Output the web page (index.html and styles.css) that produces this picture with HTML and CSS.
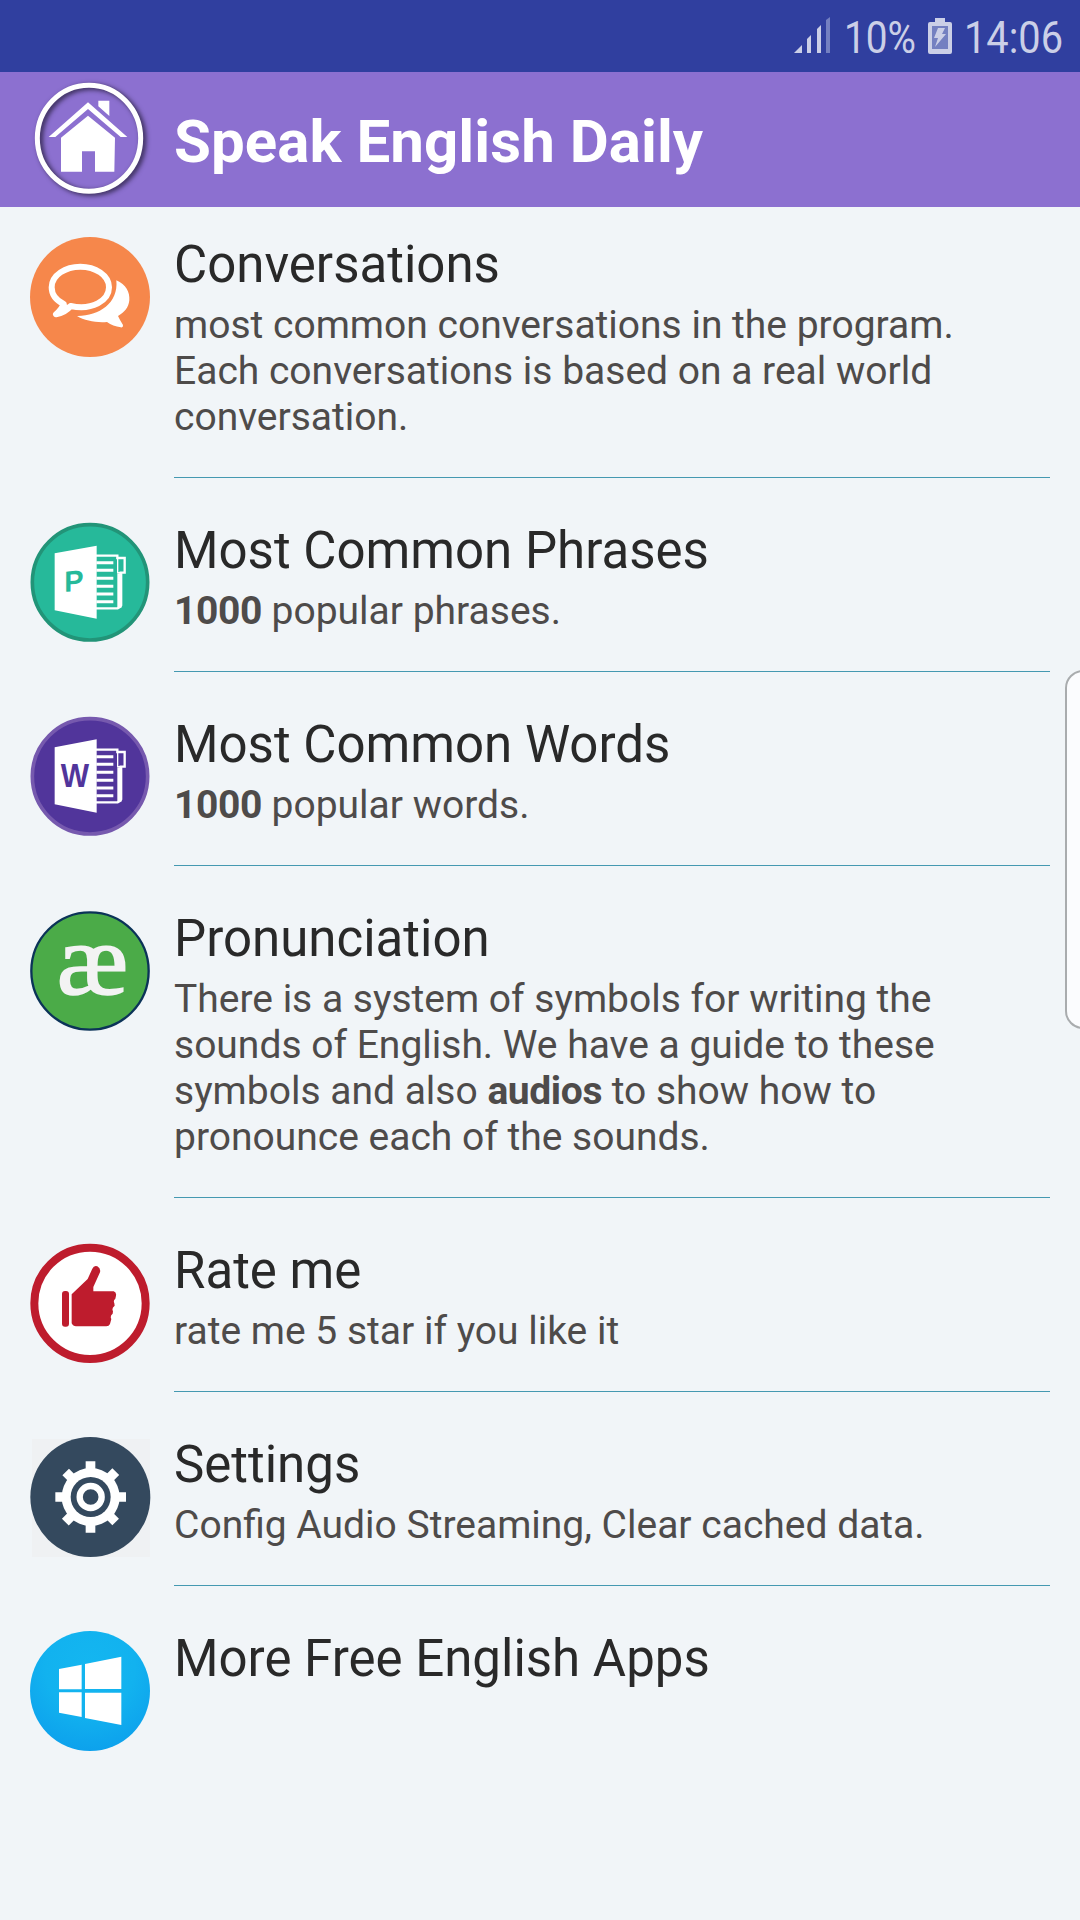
FILE: index.html
```html
<!DOCTYPE html>
<html lang="en">
<head>
    <meta charset="UTF-8">
    <title>Speak English Daily</title>
    <link rel="stylesheet" href="styles.css">
</head>
<body>
    <!-- status bar -->
    <div class="status-bar">
        <svg class="signal" viewBox="0 0 36 36">
            <path d="M0 36 L8 28 V36Z M13 22 L17 18 V36 H13Z M23 12 L27 8 V36 H23Z"/>
            <path class="dim" d="M32 3 L36 0 V36 H32Z"/>
        </svg>
        <svg class="battery-level" viewBox="0 0 70 36"><text x="-3" y="35" textLength="72" lengthAdjust="spacingAndGlyphs">10%</text></svg>
        <svg class="battery" viewBox="0 0 24 36">
            <path d="M7 0 H17 V4 H22 Q24 4 24 6 V34 Q24 36 22 36 H2 Q0 36 0 34 V6 Q0 4 2 4 H7Z"/>
            <path class="battery-inner" d="M4 8 H20 V31 H4Z"/>
            <path d="M10 10 H17 L14 16 H18 L7 29 L10 20 H6Z"/>
        </svg>
        <svg class="clock" viewBox="0 0 96 36"><text x="-2" y="35" textLength="99" lengthAdjust="spacingAndGlyphs">14:06</text></svg>
    </div>

    <header>
        <svg class="icon home" viewBox="90 57 360 360">
            <ellipse cx="267" cy="235" rx="155" ry="159"/>
            <path d="M146 231 L264 127 L382 231 H362 L264 147 L166 231Z M295 122 H328 V168 L295 139Z"/>
            <path d="M264 167 L345 233 L343 335 H285 V274 H246 V335 H183 V233Z"/>
        </svg>
        <h1>Speak English Daily</h1>
    </header>

    <main>
        <!-- Conversations -->
        <div class="item">
            <svg class="icon" viewBox="30 36 360 360">
                <circle cx="210" cy="216" r="180" fill="#f6874b"/>
                <path d="M181 125 C137 125 95 150 95 187 C95 209 108 226 131 237 Q126 253 108 268 Q135 263 152 243 C216 257 267 227 267 187 C267 150 225 125 181 125Z" fill="none" stroke="#fff" stroke-width="18" stroke-linejoin="round"/>
                <path d="M131 235 L152 243 Q135 263 108 268 Q126 253 131 235Z" fill="#fff"/>
                <path d="M289 166 C318 179 330 201 328 226 C326 247 313 263 294 273 Q300 286 309 300 Q310 309 302 307 Q279 304 261 291 C230 294 194 287 171 273 C235 274 296 236 289 166Z" fill="#fff"/>
            </svg>
            <div class="content">
                <h2>Conversations</h2>
                <p>most common conversations in the program.<br>Each conversations is based on a real world conversation.</p>
            </div>
        </div>

        <!-- Phrases -->
        <div class="item">
            <svg class="icon" viewBox="30 39 360 360">
                <circle cx="210" cy="217" r="173" fill="#26b99a" stroke="#229478" stroke-width="11"/>
                <path d="M228 137 H292 V144 H314 V188 H302 V290 L293 295 H228" fill="none" stroke="#fff" stroke-width="7"/>
                <path d="M229 158 H280 M229 181 H280 M229 205 H280 M229 229 H280 M229 252 H280 M229 275 H280" stroke="#fff" stroke-width="9"/>
                <path d="M293 144 V188 H303" fill="none" stroke="#fff" stroke-width="4"/>
                <path d="M292 190 H307 V287 L292 296Z M104 130 L230 107 V326 L104 301Z" fill="#fff"/>
                <text class="letter" x="0" y="0" transform="matrix(1 -.09 0 1 133 246)" font-size="88" textLength="58" lengthAdjust="spacingAndGlyphs" fill="#26b99a">P</text>
            </svg>
            <div class="content">
                <h2>Most Common Phrases</h2>
                <p><b>1000</b> popular phrases.</p>
            </div>
        </div>

        <!-- Words -->
        <div class="item">
            <svg class="icon" viewBox="30 36 360 360">
                <circle cx="210" cy="214" r="173" fill="#51359b" stroke="#7659ae" stroke-width="11"/>
                <path d="M228 134 H292 V141 H314 V185 H302 V287 L293 292 H228" fill="none" stroke="#fff" stroke-width="7"/>
                <path d="M229 155 H280 M229 178 H280 M229 202 H280 M229 226 H280 M229 249 H280 M229 272 H280" stroke="#fff" stroke-width="9"/>
                <path d="M293 141 V185 H303" fill="none" stroke="#fff" stroke-width="4"/>
                <path d="M292 187 H307 V284 L292 293Z M104 127 L230 103 V323 L104 298Z" fill="#fff"/>
                <text class="letter" x="0" y="0" transform="matrix(1 0 0 1 122 246)" font-size="98" textLength="85" lengthAdjust="spacingAndGlyphs" fill="#51359b">W</text>
            </svg>
            <div class="content">
                <h2>Most Common Words</h2>
                <p><b>1000</b> popular words.</p>
            </div>
        </div>

        <!-- Pronunciation -->
        <div class="item">
            <svg class="icon" viewBox="30 33 360 360">
                <circle cx="210" cy="213" r="176" fill="#4bab48" stroke="#0b3358" stroke-width="7"/>
                <text class="ae" x="110" y="281" font-size="305" textLength="214" lengthAdjust="spacingAndGlyphs">æ</text>
            </svg>
            <div class="content">
                <h2>Pronunciation</h2>
                <p>There is a system of symbols for writing the sounds of English. We have a guide to these symbols and also <b>audios</b> to show how to pronounce each of the sounds.</p>
            </div>
        </div>

        <!-- Rate -->
        <div class="item">
            <svg class="icon" viewBox="30 30 360 360">
                <circle cx="210" cy="211" r="167" fill="#fff" stroke="#be1c2d" stroke-width="24"/>
                <rect x="126" y="174" width="21" height="107" rx="9" fill="#be1c2d"/>
                <path d="M155 184 L203 138 L217 107 Q222 96 232 100 Q243 106 240 118 L220 162 V175 H281 Q290 178 288 188 L286 197 Q279 202 283 211 L284 218 Q274 226 279 235 L278 242 Q269 249 274 258 L270 273 Q267 280 259 280 H168 Q159 280 155 271Z" fill="#be1c2d"/>
            </svg>
            <div class="content">
                <h2>Rate me</h2>
                <p>rate me 5 star if you like it</p>
            </div>
        </div>

        <!-- Settings -->
        <div class="item">
            <svg class="icon" viewBox="30 30 360 360">
                <rect x="36" y="36" width="354" height="354" fill="#eff1f3"/>
                <circle cx="211" cy="210" r="180" fill="#34495e"/>
                <g fill="#fff">
                    <path d="M197 103 H226 V317 H197Z M106 196 H318 V224 H106Z"/>
                    <path d="M197 103 H226 V317 H197Z M106 196 H318 V224 H106Z" transform="rotate(45 212 210)"/>
                    <circle cx="212" cy="210" r="87"/>
                </g>
                <circle cx="212" cy="210" r="60" fill="#34495e"/>
                <circle cx="212" cy="210" r="33" fill="none" stroke="#fff" stroke-width="19"/>
            </svg>
            <div class="content">
                <h2>Settings</h2>
                <p>Config Audio Streaming, Clear cached data.</p>
            </div>
        </div>

        <!-- More apps -->
        <div class="item">
            <svg class="icon" viewBox="30 33 360 360">
                <defs>
                    <radialGradient id="sky" cx=".5" cy=".3" r=".75">
                        <stop offset="0" stop-color="#14b6f0"/>
                        <stop offset=".5" stop-color="#12b2ef"/>
                        <stop offset="1" stop-color="#0c9fec"/>
                    </radialGradient>
                </defs>
                <circle cx="210" cy="213" r="180" fill="url(#sky)"/>
                <path d="M117 147 L185 134 V208 H117Z M195 132 L304 110 V207 H195Z M117 217 H185 V291 L117 278Z M195 218 H304 V315 L195 294Z" fill="#fff"/>
            </svg>
            <div class="content">
                <h2>More Free English Apps</h2>
            </div>
        </div>
    </main>

    <!-- edge panel handle -->
    <div class="edge-handle"></div>
</body>
</html>
```
FILE: styles.css
```css
* {
    box-sizing: border-box;
}

body {
    margin: 0;
    height: 1920px;
    position: relative;
    overflow: hidden;
    background: #f1f5f8;
    font-family: Roboto, "Liberation Sans", sans-serif;
}

h1, h2, p {
    margin: 0;
}

svg {
    display: block;
    flex: none;
    overflow: visible;
}

/* status bar */
.status-bar {
    height: 72px;
    padding: 18px 18px 0 0;
    display: flex;
    justify-content: flex-end;
    background: #303f9f;
    fill: #cbcfe7;
}

.status-bar svg {
    height: 36px;
}

.status-bar text {
    font-size: 45px;
}

.signal {
    width: 36px;
    margin-right: 17px;
    margin-top: -1px;
}

.dim,
.battery-inner {
    fill: #7480c1;
}

.battery-level {
    width: 70px;
    margin-right: 11px;
}

.battery {
    width: 24px;
    margin-right: 14px;
}

.clock {
    width: 96px;
}

/* title bar */
header {
    height: 135px;
    padding: 7px 30px 0;
    display: flex;
    gap: 24px;
    background: #8c70d0;
    color: #fff;
}

header h1 {
    font-size: 60px;
    font-weight: 700;
    line-height: 70px;
    letter-spacing: 0.06px;
    padding-top: 28px;
    white-space: nowrap;
}

.icon {
    width: 120px;
    height: 120px;
}

.home {
    fill: #fff;
}

.home ellipse {
    fill: none;
    stroke: #fff;
    stroke-width: 15;
    filter: drop-shadow(8px 5px 8px rgba(20, 15, 35, 0.8));
}

/* list */
main {
    padding: 30px 30px 0;
}

.item {
    display: flex;
    gap: 24px;
    margin-bottom: 45px;
}

.content {
    flex: 1;
    padding-bottom: 37px;
    border-bottom: 1px solid #4599b1;
}

.item:last-child .content {
    border: 0;
}

.item h2 {
    margin-bottom: 9px;
    font-size: 51px;
    font-weight: 400;
    line-height: 56px;
    color: #292929;
}

.item p {
    font-size: 39px;
    line-height: 46px;
    color: #4e4b4a;
}

.item b {
    letter-spacing: -0.4px;
}

.letter {
    font-family: "Liberation Sans", Arial, sans-serif;
    font-weight: 700;
}

.ae {
    font-family: "Liberation Serif", "Times New Roman", serif;
    fill: #f3f3f3;
    stroke: #f3f3f3;
    stroke-width: 5;
}

.edge-handle {
    position: absolute;
    top: 670px;
    right: -30px;
    width: 45px;
    height: 359px;
    border: 2px solid #a9acae;
    border-radius: 18px;
    background: #fbfcfe;
}
```
